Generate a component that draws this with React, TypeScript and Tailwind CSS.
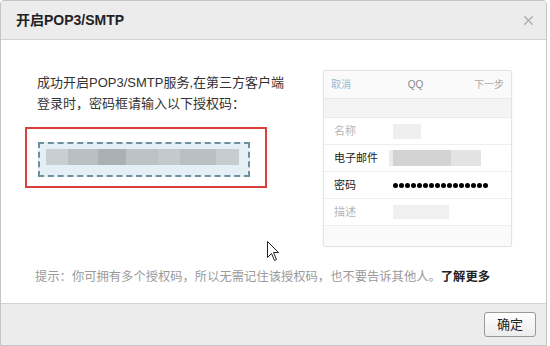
import { X } from 'lucide-react';

const phoneRows = [
    { label: '名称', dark: false },
    { label: '电子邮件', dark: true },
    { label: '密码', dark: true },
    { label: '描述', dark: false },
];

const RowValue = ({ label }: { label: string }) => {
    switch (label) {
        case '名称':
            return <div className="w-[28px] h-[15px] bg-[#efefef]" />;
        case '电子邮件':
            return (
                <div className="flex h-[16px] -ml-[4px]">
                    <div className="w-[4px] bg-[#ececec]" />
                    <div className="w-[58px] bg-[#d3d3d3]" />
                    <div className="w-[30px] bg-[#e3e3e3]" />
                </div>
            );
        case '密码':
            return (
                <div className="flex gap-[1px]">
                    {Array.from({ length: 16 }).map((_, i) => (
                        <div key={i} className="w-[5px] h-[5px] rounded-full bg-black" />
                    ))}
                </div>
            );
        default:
            return <div className="w-[56px] h-[14px] bg-[#f0f0f0]" />;
    }
};

const PhonePreview = () => (
    <div className="ml-[36px] w-[189px] h-[177px] flex flex-col border border-[#e3e3e3] bg-[#fafafa] rounded-[2px] shadow-[0_0_2px_rgba(0,0,0,0.06)]">
        <div className="h-[28px] flex items-center justify-between px-[7px] border-b border-[#e8e8e8] text-[10px]">
            <span className="text-[#8fbad8]">取消</span>
            <span className="text-[#888] pl-[6px]">QQ</span>
            <span className="text-[#aaa]">下一步</span>
        </div>
        <div className="h-[19px] bg-[#f4f4f4] border-b border-[#ececec]" />
        {phoneRows.map((row) => (
            <div
                key={row.label}
                className="h-[27px] flex items-center bg-white border-b border-[#eeeeee]"
            >
                <span
                    className={
                        row.dark
                            ? 'w-[69px] pl-[10px] text-[11px] text-[#222]'
                            : 'w-[69px] pl-[10px] text-[11px] text-[#b5b5b5]'
                    }
                >
                    {row.label}
                </span>
                <RowValue label={row.label} />
            </div>
        ))}
        <div className="flex-1 bg-[#fafafa]" />
    </div>
);

export default function App() {
    return (
        <div className="w-[550px] h-[346px] bg-white font-['Liberation_Sans','Noto_Sans_CJK_SC',sans-serif]">
            <div className="relative w-[547px] h-[346px] flex flex-col border border-[#c4c4c4] rounded-t-[4px] overflow-hidden">
                <div className="h-[39px] flex-none flex items-center justify-between pl-[15px] pr-[10px] bg-[#ececec] border-b border-[#d2d2d2]">
                    <span className="text-[14px] font-bold text-[#222]">开启POP3/SMTP</span>
                    <X size={15} strokeWidth={2.2} className="text-[#ababab]" />
                </div>

                <div className="flex-1 px-[24px] pt-[30px]">
                    <div className="flex">
                        <div className="w-[262px] pt-[2px]">
                            <p className="pl-[12px] text-[13px] leading-[21px] text-[#333]">
                                成功开启POP3/SMTP服务,在第三方客户端
                                <br />
                                登录时，密码框请输入以下授权码：
                            </p>
                            <div className="mt-[13px] w-[242px] h-[61px] border-2 border-[#d8413b] pt-[13px] pl-[11px]">
                                <div className="w-[212px] h-[35px] border-2 border-dashed border-[#6e8f9e] bg-[#e5eff6] px-[6px] py-[5px]">
                                    <div className="flex h-[16px] w-[193px]">
                                        <div className="w-[22px] bg-[#c8cfd3]" />
                                        <div className="w-[30px] bg-[#b9c0c3]" />
                                        <div className="w-[28px] bg-[#aab1b4]" />
                                        <div className="w-[32px] bg-[#bcc3c6]" />
                                        <div className="w-[22px] bg-[#c3cacd]" />
                                        <div className="w-[36px] bg-[#b9c0c3]" />
                                        <div className="w-[23px] bg-[#c6cdd0]" />
                                    </div>
                                </div>
                            </div>
                        </div>
                        <PhonePreview />
                    </div>

                    <p className="mt-[20px] pl-[10px] text-[12.3px] leading-[20px] text-[#9a9a9a] whitespace-nowrap">
                        提示：你可拥有多个授权码，所以无需记住该授权码，也不要告诉其他人。
                        <span className="text-[#222] font-semibold">了解更多</span>
                    </p>
                </div>

                <div className="h-[42px] flex-none flex justify-end pt-[8px] pr-[10px] bg-[#ececec] border-t border-[#d3d3d3]">
                    <button className="w-[52px] h-[25px] border border-[#9a9a9a] rounded-[3px] bg-gradient-to-b from-[#ffffff] to-[#ececec] text-[13px] text-[#222]">
                        确定
                    </button>
                </div>

                <svg
                    className="absolute left-[266px] top-[240px]"
                    width="13"
                    height="21"
                    viewBox="0 0 13 21"
                >
                    <path
                        d="M0.5 0.5 L0.5 16.5 L4.5 12.5 L7.5 19.5 L9.5 18.5 L6.5 11.5 L11.5 11.5 Z"
                        fill="#fff"
                        stroke="#222"
                        strokeWidth="1"
                    />
                </svg>
            </div>
        </div>
    );
}
